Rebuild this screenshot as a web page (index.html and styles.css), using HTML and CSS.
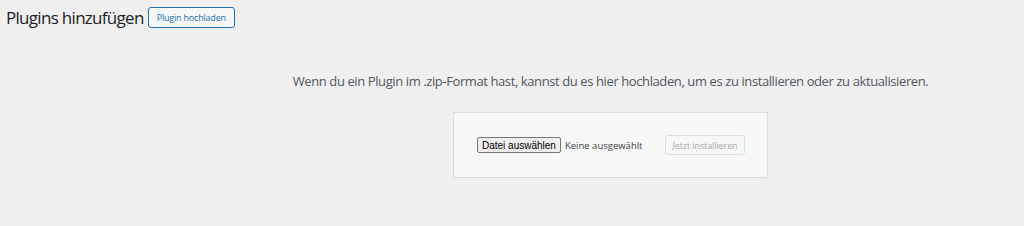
FILE: index.html
```html
<!DOCTYPE html>
<html lang="de">
  <head>
    <meta charset="UTF-8">
    <meta name="viewport" content="width=device-width, initial-scale=1.0"/>
    <title>Plugins hinzufügen</title>
    <link rel="stylesheet" href="styles.css">
  </head>
  <body>
    <div class="wrap">
      <div class="heading">
        <h1>Plugins hinzufügen</h1>
        <button class="page-title-action">Plugin hochladen</button>
      </div>

      <div class="upload-plugin">
        <p class="install-help">Wenn du ein Plugin im .zip-Format hast, kannst du es hier hochladen, um es zu installieren oder zu aktualisieren.</p>
        <form class="wp-upload-form" action="">
          <span class="file-picker">
            <button type="button" class="file-button">Datei auswählen</button>
            <span class="file-name">Keine ausgewählt</span>
          </span>
          <button type="submit" class="install-button" disabled>Jetzt installieren</button>
        </form>
      </div>
    </div>
  </body>
</html>
```

FILE: styles.css
```css
*
{
  box-sizing: border-box;
}

body
{
  margin: 0;
  background: #f0f0f1;
  color: #3c434a;
  font-family: "Open Sans", "Noto Sans", sans-serif;
  font-size: 13px;
}

.wrap
{
  padding: 6px 0 0 6px;
}

.heading
{
  display: flex;
  align-items: center;
  gap: 4px;
}

h1
{
  margin: 0;
  font-size: 17px;
  letter-spacing: -0.7px;
  font-weight: 400;
  color: #1d2327;
}

.page-title-action
{
  height: 21px;
  padding: 0 8px;
  border: 1px solid #2271b1;
  border-radius: 3px;
  background: #f6f7f7;
  color: #2271b1;
  font-family: inherit;
  font-size: 9px;
  letter-spacing: -0.2px;
}

.upload-plugin
{
  display: flex;
  flex-direction: column;
  align-items: center;
  margin-left: 191px;
  padding-top: 43px;
}

.install-help
{
  margin: 0 0 22px;
  color: #50575e;
  font-size: 13px;
  letter-spacing: -0.4px;
}

.wp-upload-form
{
  display: flex;
  align-items: center;
  justify-content: space-between;
  width: 315px;
  height: 66px;
  padding: 0 22px 0 23px;
  border: 1px solid #dcdcde;
  background: #f6f7f7;
}

.file-picker
{
  display: flex;
  align-items: center;
  gap: 4px;
}

.file-button
{
  height: 16px;
  padding: 0 4px;
  border: 1px solid #767676;
  border-radius: 2px;
  background: #efefef;
  color: #000;
  font-family: "Liberation Sans", Arial, sans-serif;
  font-size: 10px;
}

.file-name
{
  color: #3c434a;
  font-size: 9.5px;
}

.install-button
{
  height: 20px;
  width: 80px;
  padding: 0;
  border: 1px solid #dcdcde;
  border-radius: 3px;
  background: #f6f7f7;
  color: #a7aaad;
  font-family: inherit;
  font-size: 9px;
  letter-spacing: -0.1px;
}
```
